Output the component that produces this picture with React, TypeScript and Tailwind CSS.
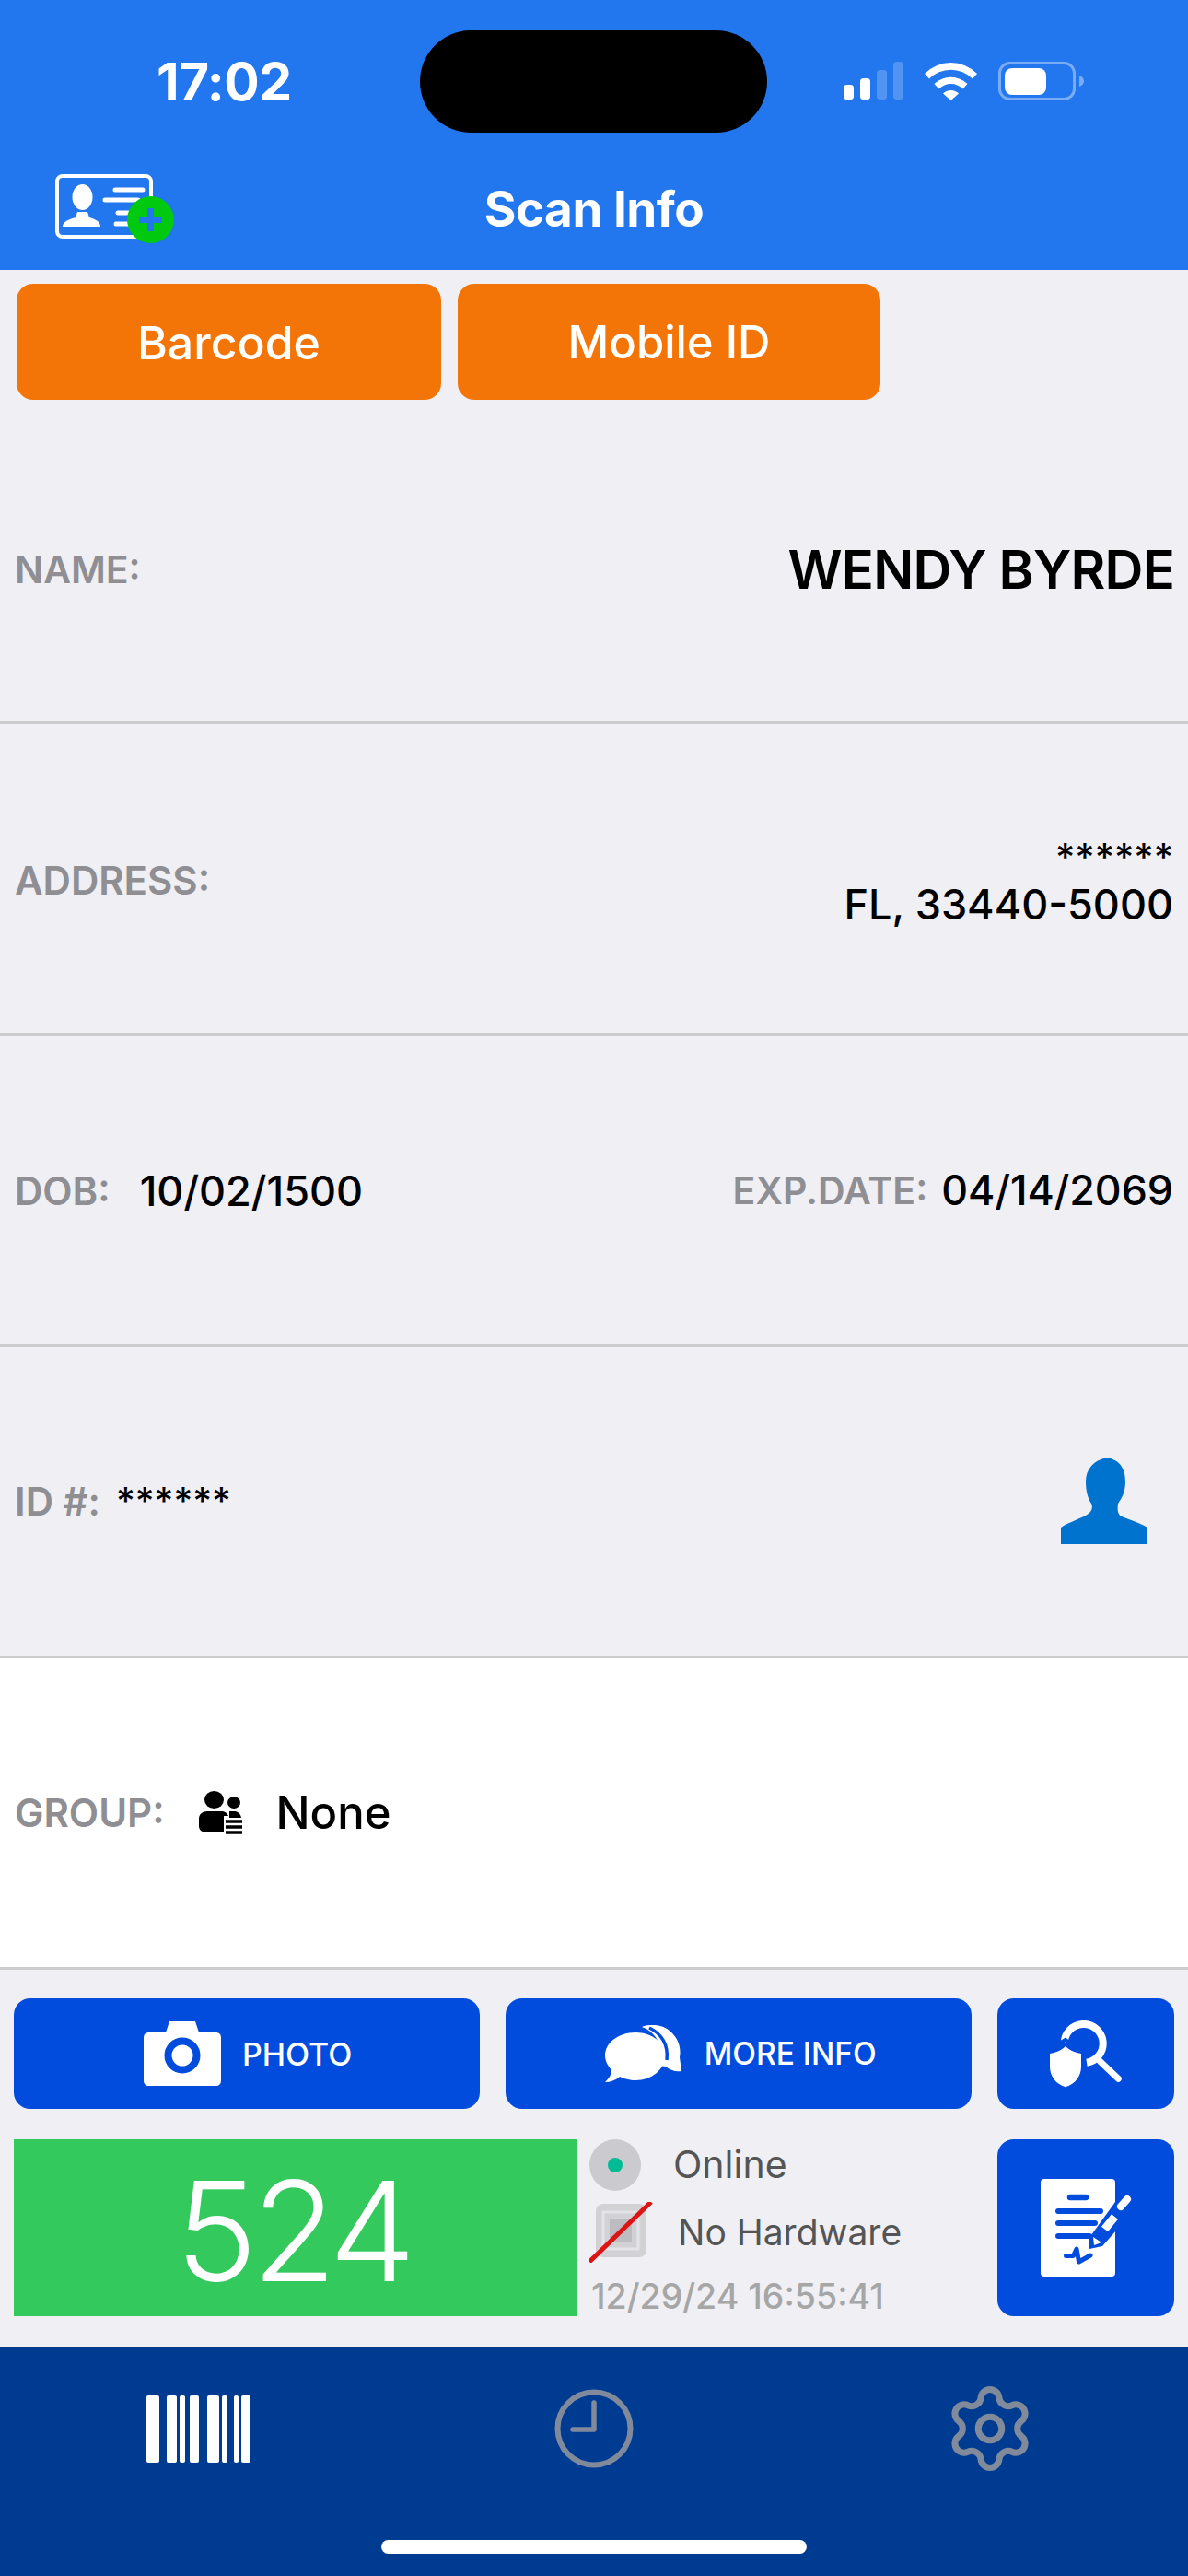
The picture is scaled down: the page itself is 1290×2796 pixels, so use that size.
import { Settings } from "lucide-react";

function IdCardIcon() {
  return (
    <svg width="130" height="76" viewBox="0 0 130 76" fill="none">
      <rect x="2" y="2" width="102" height="66" rx="6" stroke="white" strokeWidth="4" />
      <ellipse cx="29.5" cy="25" rx="11" ry="14" fill="white" />
      <path d="M8 57c0-6 8-8 14-10l2-6h11l2 6c6 2 12 4 12 10z" fill="white" />
      <g stroke="white" strokeWidth="5" strokeLinecap="round">
        <path d="M65 17h30M54 28h36M68 42h14M66 54h14" />
      </g>
      <circle cx="103.5" cy="49.5" r="25.5" fill="#00c910" />
      <path d="M103.5 37v25M91 49.5h25" stroke="#2276ee" strokeWidth="7" />
    </svg>
  );
}

function StatusIcons() {
  return (
    <div className="flex items-start pl-[83px]">
      <svg width="66" height="42" viewBox="0 0 66 42" className="mt-[-1px]">
        <rect x="0" y="25" width="11" height="16" rx="3.5" fill="white" />
        <rect x="18" y="18" width="11" height="23" rx="3.5" fill="white" />
        <rect x="36" y="9" width="11" height="32" rx="3.5" fill="white" fillOpacity="0.22" />
        <rect x="54" y="0" width="11" height="41" rx="3.5" fill="white" fillOpacity="0.22" />
      </svg>
      <svg width="58" height="42" viewBox="0 0 58 42" className="ml-[22px] mt-[-1px]">
        <path
          d="M0 13A40 40 0 0 1 57 13L52 18.500A33 33 0 0 0 5 18.500ZM10.500 24A26 26 0 0 1 46.500 24L41.500 29.500A18 18 0 0 0 15.500 29.500ZM20 34.500A12 12 0 0 1 37 34.500L28.500 42Z"
          fill="white"
        />
      </svg>
      <svg width="94" height="42" viewBox="0 0 94 42" className="ml-[22px] mt-[-1px]">
        <rect x="1.500" y="1.500" width="81" height="39" rx="11" fill="none" stroke="white" strokeOpacity="0.4" strokeWidth="3" />
        <rect x="7" y="7" width="45" height="29" rx="8" fill="white" />
        <path d="M88 23V11c3 1 5 3 5 6s-2 5-5 6z" transform="translate(0 4)" fill="white" fillOpacity="0.4" />
      </svg>
    </div>
  );
}

function PersonIcon() {
  return (
    <svg width="94" height="94" viewBox="0 0 94 94">
      <path
        d="M50 0C60 2 70 8 70 26C70 38 66 44 62 50C61 58 62 62 66 64C76 68 88 72 94 76V94H0V76C8 70 24 66 31 60C35 56 34 52 33 50C29 44 27 36 27 26C27 12 36 3 50 0Z"
        fill="#0073cf"
      />
    </svg>
  );
}

function GroupIcon() {
  return (
    <svg width="47" height="48" viewBox="0 0 47 48">
      <ellipse cx="16.500" cy="9.500" rx="10.500" ry="9.500" fill="black" />
      <ellipse cx="38" cy="12.500" rx="7" ry="6.500" fill="black" />
      <path d="M0 30c0-5 4-8 9-8h15c4 0 7 2 8 5h-5v18H8c-5 0-8-3-8-7z" fill="black" />
      <path d="M33 22h5c4 0 7 2 8 7H33z" fill="black" />
      <path d="M29 33h18M29 39h18M29 45h18" stroke="black" strokeWidth="3.500" />
    </svg>
  );
}

function CameraIcon() {
  return (
    <svg width="84" height="70" viewBox="0 0 84 70">
      <path
        d="M28 0H56L60 12H78C82 12 84 14 84 18V64C84 68 82 70 78 70H6C2 70 0 68 0 64V18C0 14 2 12 6 12H24Z"
        fill="white"
      />
      <circle cx="42" cy="37" r="15.500" fill="white" stroke="#024cdd" strokeWidth="8" />
    </svg>
  );
}

function ChatIcon() {
  return (
    <svg width="84" height="62" viewBox="0 0 84 62">
      <path
        d="M40 2C46 -1 62 -2 71 7C79 14 83 24 81 35L83 50C77 51 70 49 66 45L58 44C66 30 58 8 40 2Z"
        fill="white"
      />
      <path
        d="M33 8C51 8 65 19 65 33C65 48 51 60 33 60C27 60 20 58 16 56C11 60 6 62 0 62C4 58 7 54 7 49C3 44 0 39 0 33C0 19 15 8 33 8Z"
        fill="white"
      />
      <path d="M48 3C61 9 69 21 67 38" fill="none" stroke="#024cdd" strokeWidth="3.500" />
    </svg>
  );
}

function ShieldSearchIcon() {
  return (
    <svg width="78" height="73" viewBox="0 0 78 73" fill="none">
      <path d="M15.700 25A21 21 0 1 1 40 45.700" stroke="white" strokeWidth="8" />
      <path d="M51.700 41.700L74.300 63.300" stroke="white" strokeWidth="7" strokeLinecap="round" />
      <path
        d="M17 28C22 33 28 35 34 36V50C34 60 28 69 17 72.300C6 69 0 60 0 50V36C6 35 12 33 17 28Z"
        fill="white"
      />
      <path d="M9 25.500L17 21L22 25" stroke="#024cdd" strokeWidth="4" />
    </svg>
  );
}

function SignDocIcon() {
  return (
    <svg width="99" height="106" viewBox="0 0 99 106" fill="none">
      <rect x="0" y="0" width="81" height="106" rx="4" fill="white" />
      <path d="M32 20h17" stroke="#024cdd" strokeWidth="6.500" strokeLinecap="round" />
      <path d="M19 35h46M19 48h40M19 62h34" stroke="#024cdd" strokeWidth="6" strokeLinecap="round" />
      <path d="M81 25L52 65L53 76L67 73L82 56Z" fill="#024cdd" />
      <path d="M94 22L87 30" stroke="white" strokeWidth="8" strokeLinecap="round" />
      <path d="M80.500 41L69.500 54.500" stroke="white" strokeWidth="9" />
      <path d="M57 63L66 69L58 72Z" fill="white" />
      <path d="M27.500 83.500H35.500L39 76L41.500 90L54 83" stroke="#024cdd" strokeWidth="5" strokeLinecap="round" strokeLinejoin="round" />
    </svg>
  );
}

function ChipIcon() {
  return (
    <svg width="70" height="66" viewBox="0 0 70 66" className="shrink-0">
      <rect x="7" y="2" width="55" height="58" rx="8" fill="#d2d2d5" />
      <rect x="15" y="11" width="38" height="40" fill="none" stroke="#e4e4e8" strokeWidth="3" />
      <rect x="22" y="18" width="24" height="26" fill="#bdbdc1" />
      <path d="M67 0L0 65" stroke="#dc1414" strokeWidth="5" />
    </svg>
  );
}

function BarcodeIcon() {
  const bars = [
    [0, 14],
    [22, 11],
    [36, 6],
    [47, 10],
    [66, 13],
    [82, 6],
    [95, 5],
    [103, 10],
  ];
  return (
    <svg width="113" height="73" viewBox="0 0 113 73">
      {bars.map(([x, w]) => (
        <rect key={x} x={x} y="0" width={w} height="73" rx="2" fill="white" />
      ))}
    </svg>
  );
}

function ClockIcon() {
  return (
    <svg width="86" height="86" viewBox="0 0 86 86" fill="none" stroke="#808a9b">
      <circle cx="43" cy="43" r="39.500" strokeWidth="6" />
      <path d="M43 15V44H20" strokeWidth="5.500" strokeLinecap="round" strokeLinejoin="round" />
    </svg>
  );
}

export default function App() {
  return (
    <div className="w-[1290px] h-[2796px] flex flex-col bg-[#efeff4] overflow-hidden font-['Inter',sans-serif] text-black">
      {/* Header */}
      <div className="h-[293px] shrink-0 bg-[#2276ee] text-white">
        <div className="flex items-center h-[111px] mt-[33px] pt-0">
          <div className="w-[456px] pl-[170px] text-[57px] font-bold leading-none tracking-[-0.5px]">17:02</div>
          <div className="w-[377px] h-[111px] rounded-[56px] bg-black" />
          <StatusIcons />
        </div>
        <div className="grid grid-cols-3 items-center h-[98px] mt-[34px]">
          <div className="pl-[60px]">
            <IdCardIcon />
          </div>
          <div className="text-center text-[53px] font-bold whitespace-nowrap tracking-[-0.5px] pt-[2px]">Scan Info</div>
        </div>
      </div>

      {/* Scan type tabs */}
      <div className="h-[155px] shrink-0 flex gap-[18px] pl-[18px] pt-[15px]">
        <button className="w-[461px] h-[126px] rounded-[18px] bg-[#f47507] text-white text-[50px] font-medium pt-[2px]">Barcode</button>
        <button className="w-[459px] h-[126px] rounded-[18px] bg-[#f47507] text-white text-[49px] font-medium pt-[2px]">Mobile ID</button>
      </div>

      {/* Info rows */}
      <div className="h-[338px] shrink-0 flex items-center justify-between pl-[16px] pr-[15px] pt-[6px] border-b-[3px] border-[#cccccc]">
        <span className="text-[41px] font-semibold text-[#8e8e93]">NAME:</span>
        <span className="text-[58px] font-[560] tracking-[-0.8px]">WENDY BYRDE</span>
      </div>

      <div className="h-[338px] shrink-0 flex items-center justify-between pl-[16px] pr-[16px] pt-[4px] border-b-[3px] border-[#cccccc]">
        <span className="text-[42px] font-semibold text-[#8e8e93]">ADDRESS:</span>
        <div className="text-right text-[45px] font-medium leading-[52px]">
          <div className="text-[41px]">******</div>
          <div>FL, 33440-5000</div>
        </div>
      </div>

      <div className="h-[338px] shrink-0 flex items-center pl-[16px] pr-[16px] pt-[2px] border-b-[3px] border-[#cccccc]">
        <span className="text-[42px] font-semibold text-[#8e8e93]">DOB:</span>
        <span className="ml-[32px] text-[45px] font-medium">10/02/1500</span>
        <span className="ml-auto text-[41px] font-semibold text-[#8e8e93]">EXP.DATE:</span>
        <span className="ml-[15px] text-[44.7px] font-medium">04/14/2069</span>
      </div>

      <div className="h-[338px] shrink-0 flex items-center pl-[16px] pr-[44px] border-b-[3px] border-[#cccccc]">
        <span className="text-[42px] font-semibold text-[#8e8e93]">ID #:</span>
        <span className="ml-[17px] mb-[2px] text-[40px] font-medium">******</span>
        <div className="ml-auto mb-[2px]">
          <PersonIcon />
        </div>
      </div>

      <div className="h-[338px] shrink-0 flex items-center pl-[16px] bg-white border-b-[3px] border-[#cccccc]">
        <span className="text-[42px] font-semibold text-[#8e8e93]">GROUP:</span>
        <div className="ml-[37px]">
          <GroupIcon />
        </div>
        <span className="ml-[37px] text-[49px] font-medium">None</span>
      </div>

      {/* Action panel */}
      <div className="flex-1 flex flex-col px-[15px] pt-[31px]">
        <div className="flex gap-[28px] h-[120px]">
          <button className="w-[507px] flex items-center justify-center gap-[23px] rounded-[18px] bg-[#024cdd] text-white text-[34px] font-medium pl-[2px]">
            <CameraIcon />
            <span>PHOTO</span>
          </button>
          <button className="w-[507px] flex items-center justify-center gap-[24px] rounded-[18px] bg-[#024cdd] text-white text-[33.5px] font-medium pl-[4px]">
            <ChatIcon />
            <span>MORE INFO</span>
          </button>
          <button className="w-[192px] flex items-center justify-center rounded-[18px] bg-[#024cdd]">
            <ShieldSearchIcon />
          </button>
        </div>

        <div className="flex mt-[33px] h-[192px]">
          <div className="w-[612px] flex items-center justify-center pt-[8px] pr-[6px] bg-[#34c95c] text-white text-[150px] font-light leading-none tracking-[-6px]">524</div>
          <div className="w-[456px] pl-[13px] flex flex-col">
            <div className="flex items-center h-[56px]">
              <span className="w-[56px] h-[56px] rounded-full bg-[#cbcbcf] flex items-center justify-center">
                <span className="w-[16px] h-[16px] rounded-full bg-[#00bb94]" />
              </span>
              <span className="ml-[35px] text-[41px] text-[#555555]">Online</span>
            </div>
            <div className="flex items-center h-[66px] mt-[12px]">
              <ChipIcon />
              <span className="ml-[26px] text-[39px] text-[#555555] whitespace-nowrap">No Hardware</span>
            </div>
            <div className="mt-[15px] ml-[2px] text-[37.5px] font-medium text-[#a6a6a6] whitespace-nowrap leading-[44px]">12/29/24 16:55:41</div>
          </div>
          <button className="w-[192px] ml-auto flex items-center justify-center rounded-[18px] bg-[#024cdd]">
            <SignDocIcon />
          </button>
        </div>
      </div>

      {/* Tab bar */}
      <div className="h-[249px] shrink-0 bg-[#003b92] flex flex-col items-center">
        <div className="w-full grid grid-cols-3 grid-rows-[86px] mt-[46px] h-[86px]">
          <div className="flex items-center justify-center">
            <BarcodeIcon />
          </div>
          <div className="flex items-center justify-center">
            <ClockIcon />
          </div>
          <div className="flex items-center justify-center">
            <Settings size={102} strokeWidth={1.65} color="#808a9b" />
          </div>
        </div>
        <div className="w-[462px] h-[15px] rounded-full bg-white mt-[78px]" />
      </div>
    </div>
  );
}
